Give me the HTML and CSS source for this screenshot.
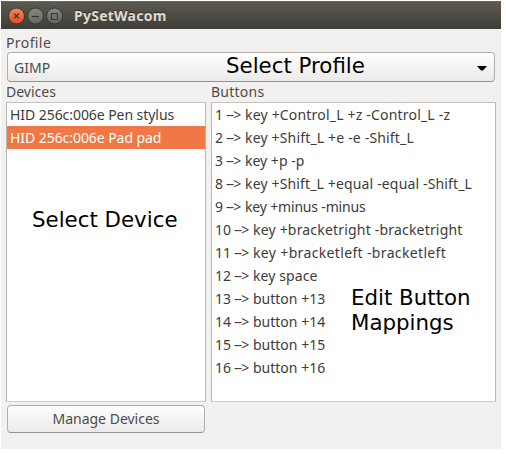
FILE: index.html
```html
<!DOCTYPE html>
<html lang="en">
<head>
<meta charset="utf-8">
<title>PySetWacom</title>
<link rel="stylesheet" href="styles.css">
</head>
<body>
<div class="window">
  <header class="titlebar">
    <svg class="controls" width="56" height="18" viewBox="0 0 56 18">
      <defs>
        <linearGradient id="red" x1="0" y1="0" x2="0" y2="1"><stop offset="0" stop-color="#f6895f"/><stop offset="1" stop-color="#e84c1e"/></linearGradient>
        <linearGradient id="gray" x1="0" y1="0" x2="0" y2="1"><stop offset="0" stop-color="#8b8a82"/><stop offset="1" stop-color="#64635c"/></linearGradient>
      </defs>
      <g stroke="#35342f" stroke-width="1">
        <circle cx="9.5" cy="9" r="8" fill="url(#red)"/>
        <circle cx="28.5" cy="9" r="8" fill="url(#gray)"/>
        <circle cx="47.5" cy="9" r="8" fill="url(#gray)"/>
      </g>
      <g fill="none" stroke="#37352f" stroke-width="1.2">
        <path d="M7 6.5l5 5M12 6.5l-5 5"/>
        <path d="M25 9.5h7"/>
        <path d="M44.5 6.5h6v6h-6z"/>
      </g>
    </svg>
    <h1 class="title">PySetWacom</h1>
  </header>
  <main class="content">
    <div class="label"><span class="t-profile">Profile</span></div>
    <div class="combo">
      <span class="t-gimp">GIMP</span>
      <span class="note">Select Profile</span>
      <svg class="arrow" width="10" height="5" viewBox="0 0 10 5"><path d="M0 0h10L6 4.6H4z" fill="#000"/></svg>
    </div>
    <div class="columns">
      <section class="devices">
        <div class="label"><span class="t-devices">Devices</span></div>
        <ul class="list">
          <li><span class="d1">HID 256c:006e Pen stylus</span></li>
          <li class="selected"><span class="d1">HID 256c:006e Pad pad</span></li>
        </ul>
        <div class="note note-device">Select Device</div>
        <button class="manage">Manage Devices</button>
      </section>
      <section class="buttons">
        <div class="label"><span class="t-buttons">Buttons</span></div>
        <ul class="list">
          <li><b>1</b><i>--&gt;</i><span class="k1">key +Control_L +z -Control_L -z</span></li>
          <li><b>2</b><i>--&gt;</i><span class="k2">key +Shift_L +e -e -Shift_L</span></li>
          <li><b>3</b><i>--&gt;</i><span>key +p -p</span></li>
          <li><b>8</b><i>--&gt;</i><span class="k8">key +Shift_L +equal -equal -Shift_L</span></li>
          <li><b>9</b><i>--&gt;</i><span class="k9">key +minus -minus</span></li>
          <li class="two"><b>10</b><i>--&gt;</i><span class="k10">key +bracketright -bracketright</span></li>
          <li class="two"><b>11</b><i>--&gt;</i><span class="k11">key +bracketleft -bracketleft</span></li>
          <li class="two"><b>12</b><i>--&gt;</i><span class="k12">key space</span></li>
          <li class="two"><b>13</b><i>--&gt;</i><span class="k13">button +13</span></li>
          <li class="two"><b>14</b><i>--&gt;</i><span class="k13">button +14</span></li>
          <li class="two"><b>15</b><i>--&gt;</i><span class="k13">button +15</span></li>
          <li class="two"><b>16</b><i>--&gt;</i><span class="k13">button +16</span></li>
        </ul>
        <div class="note note-buttons">Edit Button<br>Mappings</div>
      </section>
    </div>
  </main>
</div>
</body>
</html>
```
FILE: styles.css
```css
* { box-sizing: border-box; }
body { margin: 0; padding: 1px; background: #fff; font: 14px/20px "Noto Sans", sans-serif; color: #4c4c4c; }
.window { width: 500px; height: 448px; background: linear-gradient(#b03a20, #b03a20) 0 0 / 100% 6px no-repeat #f2f1ef; }
.titlebar { height: 28px; display: flex; align-items: center; padding: 0 0 0 6px; border-radius: 5px 5px 0 0; background: linear-gradient(#5b5a51, #3f3d37); border-top: 1px solid #6b6a60; }
.controls { display: block; }
.title { margin: 0 0 0 11px; font-size: 14px; line-height: 20px; font-weight: 700; color: #dfdbd2; letter-spacing: 0.25px; text-shadow: 0 -1px #2f2e29; }
.content { padding: 4px 5px 0; }
.label { height: 19px; line-height: 20px; white-space: nowrap; }
.combo { position: relative; height: 30px; margin: 0 1px; border: 1px solid #b1afab; border-bottom-color: #93918d; border-radius: 4px; background: linear-gradient(#fff, #ebeae8); display: flex; align-items: center; justify-content: space-between; padding: 2px 7px 0 6px; }
.note { position: absolute; font: 21.33px/25px "DejaVu Sans", sans-serif; color: #000; white-space: nowrap; }
.combo .note { left: 218px; top: 0; }
.note-device { left: 26px; top: 124px; }
.note-buttons { left: 140px; top: 202px; }
.columns { display: grid; grid-template-columns: 200px 285px; gap: 5px; margin-top: 1px; }
.devices, .buttons { position: relative; }
.columns .label { height: 19px; line-height: 18px; }
.list { list-style: none; margin: 0; padding: 0; height: 300px; border: 1px solid #b9b7b3; border-top-color: #c4c2bf; border-bottom-color: #cfcdca; background: #fff; color: #3c3c3c; }
.list li { height: 23px; line-height: 24px; padding-left: 3px; white-space: nowrap; display: flex; }
.list .selected { background: #f07746; color: #fff; }
.list b { font-weight: 400; width: 11px; }
.list i { font-style: normal; width: 19px; letter-spacing: -0.9px; }
.list .two b { width: 19px; }
.manage { display: block; width: 198px; height: 28px; margin: 3px 1px 0; padding: 0; border: 1px solid #b1afab; border-bottom-color: #93918d; border-radius: 4px; background: linear-gradient(#fff, #ebeae8); font: inherit; color: inherit; line-height: 26px; }
.t-profile { letter-spacing: 0.4px; }
.t-buttons { letter-spacing: 0.25px; }
.d1 { letter-spacing: -0.06px; }
.k1 { letter-spacing: 0.19px; }
.k2 { letter-spacing: 0.17px; }
.k8 { letter-spacing: 0.15px; }
.k9 { letter-spacing: -0.17px; }
.k10 { letter-spacing: 0.19px; }
.k11 { letter-spacing: 0.35px; }
.k12 { letter-spacing: 0.1px; }
```
